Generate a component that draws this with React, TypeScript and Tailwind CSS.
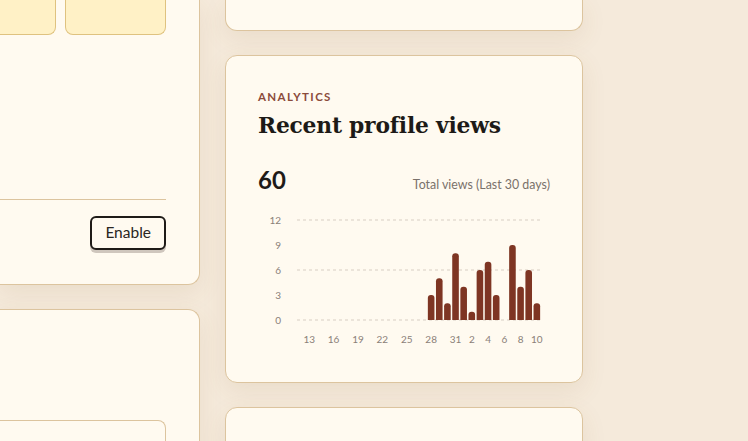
import React from "react"

const views: [string, number][] = [
  ["12", 0], ["13", 0], ["14", 0], ["15", 0], ["16", 0], ["17", 0], ["18", 0], ["19", 0],
  ["20", 0], ["21", 0], ["22", 0], ["23", 0], ["24", 0], ["25", 0], ["26", 0], ["27", 0],
  ["28", 3], ["29", 5], ["30", 2], ["31", 8], ["1", 4], ["2", 1], ["3", 6], ["4", 7],
  ["5", 3], ["6", 0], ["7", 9], ["8", 4], ["9", 6], ["10", 2],
]

const tickDays = [1, 4, 7, 10, 13, 16, 19, 21, 23, 25, 27, 29]

function ViewsChart() {
  const left = 39
  const step = 8.13
  const zeroY = 110
  const unit = 100 / 12
  const barW = 6.6

  return (
    <svg width="292" height="140" className="block">
      {[12, 9, 6, 3, 0].map((v) => (
        <text key={v} x={23} y={zeroY - v * unit + 3.5} textAnchor="end" fontSize="10" fill="#8a8078">
          {v}
        </text>
      ))}
      {[12, 6, 0].map((v) => (
        <line
          key={v}
          x1={left}
          x2={283}
          y1={zeroY - v * unit}
          y2={zeroY - v * unit}
          stroke="#d8cec3"
          strokeDasharray="3 3"
        />
      ))}
      {views.map(([day, n], i) => {
        if (!n) return null
        const cx = left + step * (i + 0.5)
        const x = cx - barW / 2
        const h = n * unit
        const top = zeroY - h
        const r = 3
        return (
          <path
            key={day + i}
            d={`M${x} ${zeroY} V${top + r} Q${x} ${top} ${x + r} ${top} H${x + barW - r} Q${x + barW} ${top} ${x + barW} ${top + r} V${zeroY} Z`}
            fill="#7e3523"
          />
        )
      })}
      {tickDays.map((i) => (
        <text key={i} x={left + step * (i + 0.5)} y={133} textAnchor="middle" fontSize="10" fill="#8a8078">
          {views[i][0]}
        </text>
      ))}
    </svg>
  )
}

export default function App() {
  const card = "bg-[#fffaf0] border-[#dcc49e] shadow-[0_8px_24px_rgba(140,100,50,0.10)]"

  return (
    <div className="w-[748px] h-[441px] overflow-hidden bg-[#f5eadb] font-['Lato',sans-serif] text-[#1f1b18]">
      <div className="flex gap-[25px] items-start">
        <div className="w-[200px] flex flex-col gap-[24px]">
          <div className={`${card} h-[285px] border-y border-r border-t-0 rounded-br-xl pr-[33px] flex flex-col`}>
            <div className="flex gap-[9px] h-[35px]">
              <div className="w-[56px] rounded-br-lg border-b border-r border-[#dfc27f] bg-[#fff1c6]" />
              <div className="flex-1 rounded-b-lg border-b border-x border-[#dfc27f] bg-[#fff1c6]" />
            </div>
            <div className="h-[165px] border-b border-[#dcc49e]" />
            <div className="flex justify-end pt-[16px]">
              <button className="h-[34px] px-[13px] rounded-md border-2 border-[#1f1b18] bg-[#fffaf0] text-[15.5px] text-[#2a2622] shadow-[0_3px_0_#cfc6bd]">
                Enable
              </button>
            </div>
          </div>
          <div className={`${card} h-[200px] border-t border-r rounded-tr-xl pr-[33px] pt-[110px]`}>
            <div className="h-[40px] border-t border-r border-[#dcc49e] rounded-tr-lg" />
          </div>
        </div>

        <div className="w-[358px] flex flex-col gap-[24px]">
          <div className={`${card} h-[31px] border-x border-b rounded-b-xl`} />
          <div className={`${card} h-[328px] border rounded-xl px-[32px] pt-[33px]`}>
            <div className="text-[11.5px] font-bold tracking-[0.12em] text-[#8b4b3b] leading-4">ANALYTICS</div>
            <h2 className="mt-[6px] font-['DejaVu_Serif',serif] font-bold text-[21.8px] leading-[30px] tracking-[-0.01em] text-[#1d1a17]">
              Recent profile views
            </h2>
            <div className="mt-[23px] flex items-baseline justify-between">
              <span className="text-[24px] font-bold leading-8 text-[#1f1b18]">60</span>
              <span className="text-[12.4px] text-[#7a716a]">Total views (Last 30 days)</span>
            </div>
            <div className="mt-[14px]">
              <ViewsChart />
            </div>
          </div>
          <div className={`${card} h-[60px] border rounded-t-xl`} />
        </div>
      </div>
    </div>
  )
}
